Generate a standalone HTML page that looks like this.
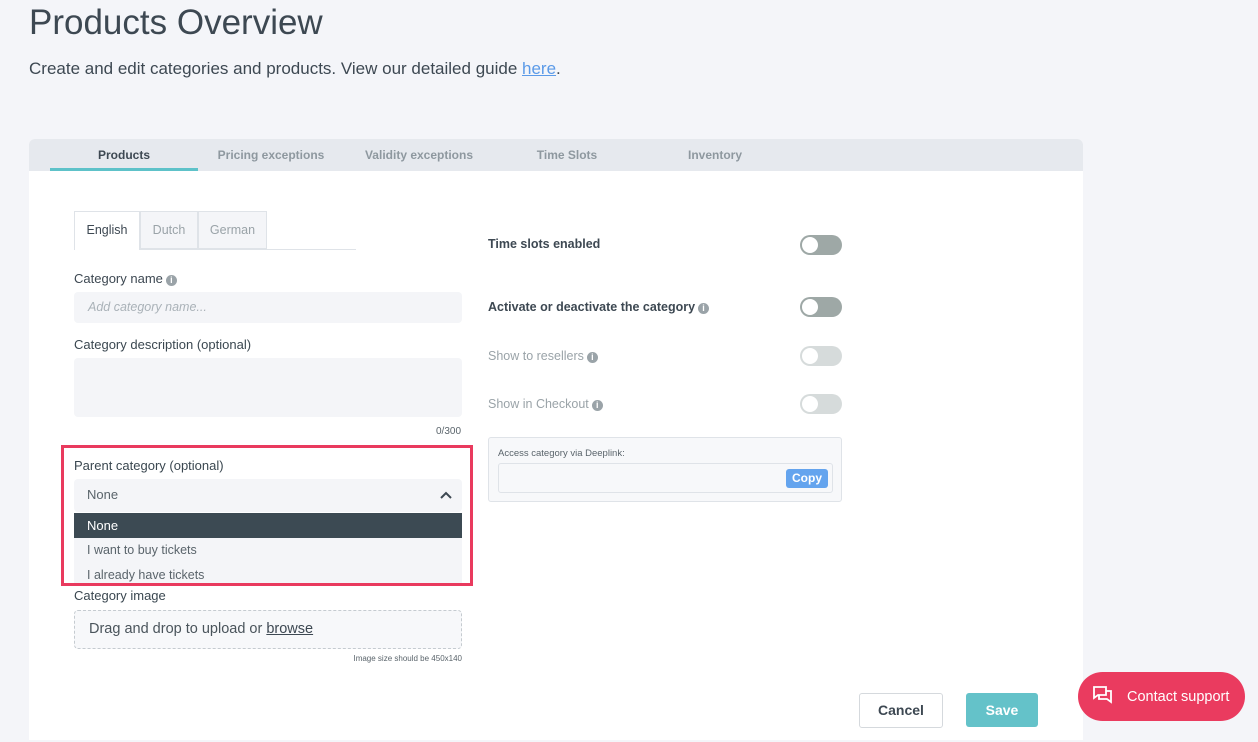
<!DOCTYPE html>
<html><head><style>
*{box-sizing:border-box;margin:0;padding:0}
body{width:1258px;height:742px;background:#f4f5f9;font-family:"Liberation Sans",sans-serif;color:#3a4750;position:relative;overflow:hidden}
.a{position:absolute}
h1{position:absolute;left:29px;top:3px;font-size:35px;font-weight:400;color:#3d4852}
.sub{left:29px;top:59px;font-size:17px;color:#3d4852}
.sub a{color:#5b9ae8;text-decoration:underline}
.card{left:29px;top:139px;width:1054px;height:601px;background:#fff;border-radius:6px 6px 0 0}
.tabs{left:29px;top:139px;width:1054px;height:32px;background:#e6e9ee;border-radius:6px 6px 0 0}
.tab{position:absolute;top:9px;font-size:12px;font-weight:bold;color:#8e989f;text-align:center}
.lbl{font-size:12.5px;font-weight:bold;color:#3d4852}
.info{display:inline-block;width:11px;height:11px;border-radius:50%;background:#9aa3a8;color:#fff;font-size:9px;text-align:center;line-height:11px;vertical-align:0px;margin-left:3px;font-weight:bold}
.inp{background:#f4f5f8;border-radius:4px}
.tog{width:42px;height:20px;border-radius:10px;background:#9ea8a6}
.tog::after{content:"";position:absolute;left:2px;top:2px;width:16px;height:16px;border-radius:50%;background:#fff}
.tog.l{background:#d6dbdb}
.dim{color:#9aa3a8;font-weight:normal}
</style></head><body>
<h1>Products Overview</h1>
<div class="a sub">Create and edit categories and products. View our detailed guide <a>here</a>.</div>
<div class="a card"></div>
<div class="a tabs">
<div class="tab" style="left:22px;width:146px;color:#3d4852">Products</div>
<div class="a" style="left:21px;top:29px;width:148px;height:3px;background:#5ec2c9"></div>
<div class="tab" style="left:168px;width:148px">Pricing exceptions</div>
<div class="tab" style="left:316px;width:148px">Validity exceptions</div>
<div class="tab" style="left:464px;width:148px">Time Slots</div>
<div class="tab" style="left:612px;width:148px">Inventory</div>
</div>
<div class="a" style="left:74px;top:211px;width:282px;height:39px;border-bottom:1px solid #dfe3e8"></div>
<div class="a" style="left:74px;top:211px;width:66px;height:39px;border:1px solid #dfe3e8;border-bottom:none;background:#fff;font-size:12.5px;text-align:center;line-height:37px;color:#3d4852">English</div>
<div class="a" style="left:140px;top:211px;width:58px;height:38px;border:1px solid #dfe3e8;background:#f4f5f8;font-size:12.5px;text-align:center;line-height:37px;color:#9aa3a8">Dutch</div>
<div class="a" style="left:198px;top:211px;width:69px;height:38px;border:1px solid #dfe3e8;background:#f4f5f8;font-size:12.5px;text-align:center;line-height:37px;color:#9aa3a8">German</div>
<div class="a" style="left:74px;top:271px;font-size:13px;color:#3d4852">Category name<span class="info">i</span></div>
<div class="a inp" style="left:74px;top:292px;width:388px;height:31px;font-size:12.5px;font-style:italic;color:#aab2b8;padding:8px 14px">Add category name...</div>
<div class="a" style="left:74px;top:337px;font-size:13px">Category description (optional)</div>
<div class="a inp" style="left:74px;top:358px;width:388px;height:59px"></div>
<div class="a" style="left:436px;top:426px;font-size:10px;color:#5a646b">0/300</div>
<div class="a" style="left:61px;top:445px;width:412px;height:141px;border:3px solid #e93a5e"></div>
<div class="a" style="left:74px;top:458px;font-size:13px">Parent category (optional)</div>
<div class="a inp" style="left:74px;top:479px;width:388px;height:33px;font-size:13px;color:#5a646b;padding:8px 13px">None<svg class="a" style="left:366px;top:12px" width="12" height="8"><path d="M1 7L6 2L11 7" stroke="#3d4852" stroke-width="2" fill="none"/></svg></div>
<div class="a" style="left:74px;top:513px;width:388px;height:25px;background:#3c4a53;color:#fff;font-size:13px;padding:5px 13px">None</div>
<div class="a" style="left:74px;top:538px;width:388px;height:45px;background:#f4f5f8;font-size:12.5px;color:#5a646b;padding:0 13px;line-height:25px">I want to buy tickets<br>I already have tickets</div>
<div class="a" style="left:74px;top:588px;font-size:13px">Category image</div>
<div class="a" style="left:74px;top:610px;width:388px;height:39px;border:1.5px dashed #c5cbd0;border-radius:4px;background:#f7f8fa;font-size:14.5px;color:#4a545b;padding:10px 14px">Drag and drop to upload or <u style="color:#3d4852">browse</u></div>
<div class="a" style="left:262px;width:200px;text-align:right;top:654px;font-size:8px;color:#5a646b">Image size should be 450x140</div>

<div class="a lbl" style="left:488px;top:237px">Time slots enabled</div>
<div class="a tog" style="left:800px;top:235px"></div>
<div class="a lbl" style="left:488px;top:300px">Activate or deactivate the category<span class="info">i</span></div>
<div class="a tog" style="left:800px;top:297px"></div>
<div class="a lbl dim" style="left:488px;top:349px">Show to resellers<span class="info">i</span></div>
<div class="a tog l" style="left:800px;top:346px"></div>
<div class="a lbl dim" style="left:488px;top:397px">Show in Checkout<span class="info">i</span></div>
<div class="a tog l" style="left:800px;top:394px"></div>
<div class="a" style="left:488px;top:437px;width:354px;height:65px;border:1px solid #dfe3e8;border-radius:3px;background:#f7f8fa"></div>
<div class="a" style="left:498px;top:448px;font-size:9.5px;color:#5a646b">Access category via Deeplink:</div>
<div class="a" style="left:498px;top:463px;width:335px;height:30px;border:1px solid #dfe3e8;border-radius:3px;background:#f7f8fa"></div>
<div class="a" style="left:786px;top:469px;width:42px;height:19px;background:#64a4ee;border-radius:3px;color:#fff;font-size:12px;text-align:center;line-height:19px;font-weight:bold">Copy</div>

<div class="a" style="left:859px;top:693px;width:84px;height:35px;border:1px solid #d5d9dd;border-radius:3px;font-size:14px;font-weight:bold;text-align:center;line-height:33px;color:#3d4852">Cancel</div>
<div class="a" style="left:966px;top:693px;width:72px;height:34px;background:#64c2c9;border-radius:3px;font-size:14px;font-weight:bold;text-align:center;line-height:34px;color:#fff">Save</div>
<div class="a" style="left:1078px;top:672px;width:167px;height:49px;background:#ea3b5f;border-radius:25px;color:#fff;font-size:14.5px;line-height:50px;padding-left:49px">Contact support
<svg class="a" style="left:14px;top:13px" width="22" height="22" fill="none" stroke="#fff" stroke-width="1.8"><path d="M2 2h12v8H6l-4 3z"/><path d="M7 10v4h8l4 3V6h-5"/></svg></div>
</body></html>
